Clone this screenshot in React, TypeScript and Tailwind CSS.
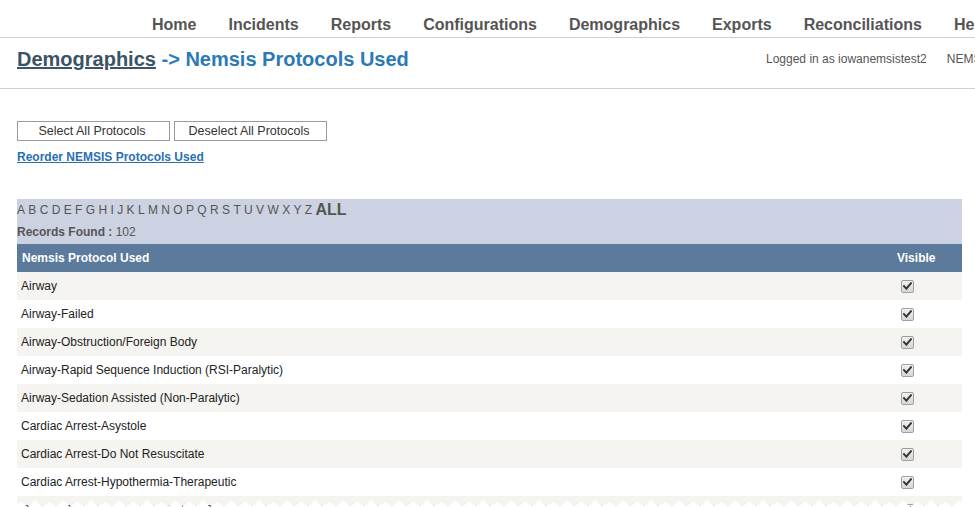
import React from "react";

const navItems = ["Home", "Incidents", "Reports", "Configurations", "Demographics", "Exports", "Reconciliations", "Help"];
const letters = "ABCDEFGHIJKLMNOPQRSTUVWXYZ".split("");
const rows = [
  "Airway",
  "Airway-Failed",
  "Airway-Obstruction/Foreign Body",
  "Airway-Rapid Sequence Induction (RSI-Paralytic)",
  "Airway-Sedation Assisted (Non-Paralytic)",
  "Cardiac Arrest-Asystole",
  "Cardiac Arrest-Do Not Resuscitate",
  "Cardiac Arrest-Hypothermia-Therapeutic",
  "Cardiac Arrest-Post Resuscitation Care",
];

function Check() {
  return (
    <span className="inline-flex h-[13px] w-[13px] items-center justify-center rounded-[2px] border border-[#a0a0a0] bg-gradient-to-b from-[#f0f0f0] to-[#d6d6d6]">
      <svg width="9" height="8" viewBox="0 0 9 8">
        <path d="M1 4.2 L3.4 6.6 L8 1.2" fill="none" stroke="#333" strokeWidth="2" strokeLinecap="square" />
      </svg>
    </span>
  );
}

export default function App() {
  const zig: string[] = [];
  for (let x = 0; x <= 980; x += 14) {
    zig.push(`${x},8`);
    zig.push(`${x + 7},${x % 28 === 0 ? 1 : 3}`);
  }
  return (
    <div className="relative h-[507px] w-[975px] overflow-hidden bg-white font-['Liberation_Sans',Arial,sans-serif]">
      <div className="flex h-[38px] items-center gap-8 whitespace-nowrap border-b border-[#cfcfcf] pl-[152px] pt-[13px] text-[16px] font-bold text-[#555]">
        {navItems.map((n) => (
          <span key={n} className="shrink-0">{n}</span>
        ))}
      </div>
      <div className="flex h-[51px] items-center whitespace-nowrap border-b border-[#cfcfcf] pb-[8px]">
        <div className="w-[766px] shrink-0 pl-[17px] text-[20px] font-bold">
          <span className="text-[#3b5366] underline">Demographics</span>
          <span className="text-[#2a7ab9]"> -&gt; Nemsis Protocols Used</span>
        </div>
        <div className="flex shrink-0 gap-5 text-[12px] text-[#555]">
          <span>Logged in as iowanemsistest2</span>
          <span>NEMSIS Iowa</span>
        </div>
      </div>
      <div className="px-[17px] pt-[32px]">
        <div className="flex gap-1">
          <button className="h-[20px] w-[153px] border border-[#9a9a9a] bg-white pr-[3px] text-[12.5px] text-[#333]">Select All Protocols</button>
          <button className="h-[20px] w-[153px] border border-[#9a9a9a] bg-white pr-[3px] text-[12.5px] text-[#333]">Deselect All Protocols</button>
        </div>
        <div className="mt-[7px] text-[12px] font-bold text-[#2a6fb3] underline">Reorder NEMSIS Protocols Used</div>
        <div className="mt-[33px] w-[945px]">
          <div className="bg-[#ccd2e2] pt-[1px]">
            <div className="flex h-[20px] items-center text-[12px] text-[#555]">
              {letters.map((l) => (
                <span key={l} className="mr-[3.35px]">{l}</span>
              ))}
              <span className="text-[16px] font-bold">ALL</span>
            </div>
            <div className="flex h-[24px] items-center text-[12px] text-[#555]">
              <span className="font-bold">Records Found :</span>
              <span>&nbsp;102</span>
            </div>
          </div>
          <div className="flex h-[28px] items-center bg-[#5b7a9c] text-[12px] font-bold text-white">
            <span className="flex-1 pl-[5px]">Nemsis Protocol Used</span>
            <span className="w-[80px] pl-[15px]">Visible</span>
          </div>
          {rows.map((r, i) => (
            <div key={r} className={`flex h-[28px] items-center text-[12px] text-[#222] ${i % 2 === 0 ? "bg-[#f5f4f0]" : "bg-white"}`}>
              <span className="flex-1 pl-[4px]">{r}</span>
              <span className="flex w-[80px] pl-[19px]">
                <Check />
              </span>
            </div>
          ))}
        </div>
      </div>
      <svg className="absolute bottom-0 left-0" width="975" height="8" viewBox="0 0 975 8" preserveAspectRatio="none">
        <polygon points={`0,8 ${zig.join(" ")} 980,8`} fill="#fff" />
      </svg>
    </div>
  );
}
